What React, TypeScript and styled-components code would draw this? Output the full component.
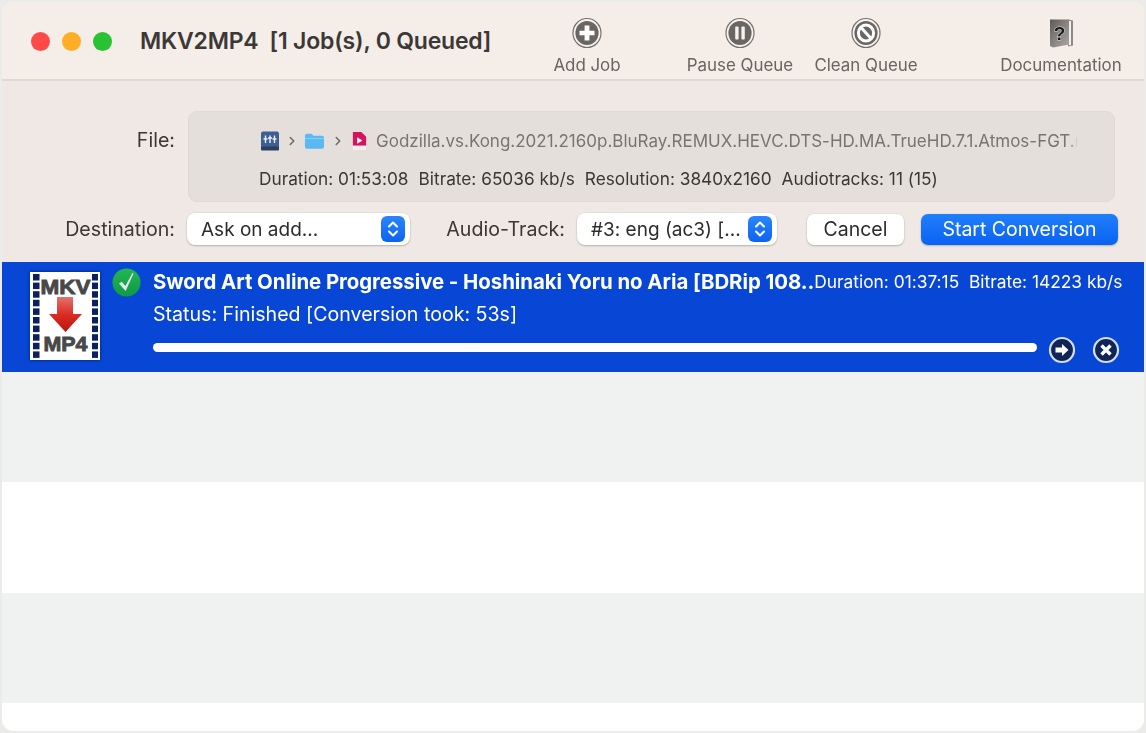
import React, { FC } from 'react'
import styled, { createGlobalStyle } from 'styled-components'
import { ChevronRight } from 'lucide-react'

const Global = createGlobalStyle`
  html, body, #root {
    margin: 0;
    height: 100%;
  }
  body {
    background: #ebebea;
    font-family: Inter, "Liberation Sans", sans-serif;
    font-feature-settings: "calt" 0;
    -webkit-font-smoothing: antialiased;
  }
  * {
    box-sizing: border-box;
  }
`

const Window = styled.div`
  width: 1142px;
  height: 729px;
  margin: 2px 0 0 2px;
  border-radius: 12px;
  overflow: hidden;
  background: #ffffff;
  display: flex;
  flex-direction: column;
  filter: blur(0.35px);
`

const TitleBar = styled.header`
  height: 79px;
  flex: none;
  background: #f5ede8;
  border-bottom: 2px solid #dfd8d4;
  display: flex;
  align-items: flex-start;
`

const Lights = styled.div`
  display: flex;
  gap: 12px;
  padding: 30px 0 0 29px;
  width: 138px;
  flex: none;
`

const Light = styled.span<{ $color: string }>`
  width: 19px;
  height: 19px;
  border-radius: 50%;
  background: ${p => p.$color};
`

const Title = styled.h1`
  margin: 0;
  width: 397px;
  flex: none;
  padding-top: 26px;
  font-size: 23px;
  line-height: 26px;
  font-weight: 600;
  color: #3b3836;
  white-space: pre;
  letter-spacing: -0.2px;
`

const ToolItem = styled.div<{ $width: number; $gap: number }>`
  width: ${p => p.$width}px;
  margin-left: ${p => p.$gap}px;
  flex: none;
  display: flex;
  flex-direction: column;
  align-items: center;
  padding-top: 15px;
`

const ToolLabel = styled.span`
  margin-top: 6px;
  font-size: 16.9px;
  line-height: 20px;
  color: #6a6461;
  white-space: nowrap;
`

const Content = styled.main`
  height: 181px;
  flex: none;
  background: #efe8e5;
  padding-top: 30px;
  display: flex;
  flex-direction: column;
`

const FileRow = styled.section`
  display: flex;
  align-items: flex-start;
`

const FormLabel = styled.label<{ $width?: number }>`
  width: ${p => p.$width ?? 173}px;
  flex: none;
  text-align: right;
  font-size: 19.6px;
  line-height: 22px;
  color: #3a3735;
  white-space: nowrap;
`

const FileLabel = styled(FormLabel)`
  padding-top: 18px;
`

const FileBox = styled.div`
  width: 927px;
  height: 91px;
  margin-left: 13px;
  background: #e5dfdc;
  border: 1px solid #e0d9d6;
  border-radius: 9px;
  padding: 18px 36px 0 71px;
`

const PathRow = styled.div`
  display: flex;
  align-items: center;
  height: 22px;
  overflow: hidden;
`

const Chevron = styled.span<{ $width: number }>`
  width: ${p => p.$width}px;
  flex: none;
  display: flex;
  justify-content: center;
  color: #6e6966;
`

const PathIcon = styled.svg`
  flex: none;
`

const FileName = styled.span`
  margin-left: 8px;
  font-size: 17px;
  line-height: 22px;
  color: #797471;
  white-space: nowrap;
  overflow: hidden;
  flex: 1;
  min-width: 0;
  mask-image: linear-gradient(to left, transparent 0, #000 10px);
`

const InfoRow = styled.div`
  display: flex;
  gap: 10px;
  margin: 17px 0 0 -1px;
  font-size: 17.25px;
  line-height: 20px;
  color: #3a3735;
  white-space: pre;
`

const ControlRow = styled.section`
  display: flex;
  align-items: center;
  margin-top: 11px;
  height: 32px;
`

const Select = styled.div<{ $width: number; $left: number }>`
  width: ${p => p.$width}px;
  height: 32px;
  margin-left: ${p => p.$left}px;
  flex: none;
  background: #ffffff;
  border-radius: 8px;
  box-shadow: 0 1px 2px rgba(0, 0, 0, 0.22), 0 0 0 0.5px rgba(0, 0, 0, 0.05);
  display: flex;
  align-items: center;
  justify-content: space-between;
  padding: 0 5px 0 14px;
  font-size: 19px;
  color: #2e2c2b;
  white-space: nowrap;
`

const Stepper = styled.span`
  width: 24px;
  height: 26px;
  border-radius: 6px;
  background: linear-gradient(#2a86fb, #0c63f3);
  display: flex;
  align-items: center;
  justify-content: center;
`

const Button = styled.button<{ $primary?: boolean; $width: number; $left: number }>`
  width: ${p => p.$width}px;
  height: 31px;
  margin-left: ${p => p.$left}px;
  flex: none;
  border: 0;
  padding: 0;
  border-radius: 7px;
  font-family: inherit;
  font-feature-settings: inherit;
  font-size: 19.5px;
  color: ${p => (p.$primary ? '#ffffff' : '#2e2c2b')};
  background: ${p => (p.$primary ? 'linear-gradient(#1f7ffb, #0b62f2)' : '#ffffff')};
  box-shadow: 0 1px 2px rgba(0, 0, 0, 0.22), 0 0 0 0.5px rgba(0, 0, 0, 0.05);
`

const Table = styled.section`
  flex: 1;
  display: flex;
  flex-direction: column;
`

const JobRow = styled.article`
  height: 110px;
  flex: none;
  background: #0847d5;
  color: #ffffff;
  display: flex;
  padding: 10px 22px 0 28px;
`

const Thumb = styled.div`
  width: 70px;
  height: 88px;
  flex: none;
  box-shadow: 0 0 3px rgba(0, 0, 0, 0.6);
`

const StatusIcon = styled.div`
  width: 29px;
  height: 29px;
  flex: none;
  margin: -4px 0 0 12px;
`

const JobBody = styled.div`
  flex: 1;
  min-width: 0;
  margin-left: 12px;
  display: flex;
  flex-direction: column;
`

const JobTop = styled.div`
  display: flex;
  justify-content: space-between;
  align-items: center;
  height: 22px;
  margin-top: -1px;
`

const JobName = styled.strong`
  font-size: 20.4px;
  line-height: 22px;
  font-weight: 700;
  white-space: nowrap;
  letter-spacing: -0.05px;
  flex: none;
`

const JobMeta = styled.span`
  font-size: 17.35px;
  line-height: 22px;
  white-space: pre;
  flex: none;
`

const JobStatus = styled.div`
  margin-top: 10px;
  font-size: 19.6px;
  line-height: 22px;
`

const ProgressRow = styled.div`
  display: flex;
  align-items: center;
  margin-top: 11px;
  height: 28px;
`

const Progress = styled.div`
  width: 884px;
  height: 9px;
  flex: none;
  margin-bottom: 5px;
  border-radius: 5px;
  background: #ffffff;
`

const RoundButton = styled.span<{ $left: number }>`
  width: 28px;
  height: 28px;
  margin-left: ${p => p.$left}px;
  flex: none;
  display: block;
`

const EmptyRow = styled.div<{ $odd?: boolean }>`
  height: 110.34px;
  flex: none;
  background: ${p => (p.$odd ? '#f0f2f1' : '#ffffff')};
`

const ToolCircle: FC<{ children: React.ReactNode }> = ({ children }) => (
  <svg width="30" height="32" viewBox="0 0 30 32">
    <ellipse cx="15" cy="16" rx="14" ry="14.5" fill="#f7f3f0" stroke="#77716e" strokeWidth="1.2" />
    <ellipse cx="15" cy="16" rx="11.6" ry="12" fill="#6a6663" />
    {children}
  </svg>
)

const RoundIcon: FC<{ children: React.ReactNode }> = ({ children }) => (
  <svg width="28" height="28" viewBox="0 0 28 28">
    <circle cx="14" cy="14" r="12" fill="#0f2558" stroke="#d5deef" strokeWidth="2.2" />
    {children}
  </svg>
)

const StepperArrows: FC = () => (
  <svg width="14" height="20" viewBox="0 0 14 20" fill="none" stroke="#ffffff" strokeWidth="2" strokeLinecap="round" strokeLinejoin="round">
    <path d="M3 7.500L7 3.500l4 4M3 12.500l4 4 4-4" />
  </svg>
)

const MkvIcon: FC = () => (
  <svg width="70" height="88" viewBox="0 0 70 88">
    <defs>
      <linearGradient id="arrow" x1="0" y1="0" x2="0" y2="1">
        <stop offset="0" stopColor="#e0736c" />
        <stop offset="0.5" stopColor="#dc2c24" />
        <stop offset="1" stopColor="#b9140f" />
      </linearGradient>
    </defs>
    <rect width="70" height="88" fill="#ffffff" />
    {Array.from({ length: 10 }).map((_, i) => (
      <g key={i} fill="#0b2060">
        <rect x="3" y={2 + i * 8.6} width="6.500" height="6.500" />
        <rect x="62" y={2 + i * 8.6} width="6" height="6.500" />
      </g>
    ))}
    <text x="35.500" y="22" textAnchor="middle" fontFamily="Liberation Sans" fontWeight="700" fontSize="21" fill="#484848" stroke="#484848" strokeWidth="0.9" textLength="50" lengthAdjust="spacingAndGlyphs">MKV</text>
    <path d="M27 25h16v17h9L35.500 60 19 42h8z" fill="url(#arrow)" />
    <text x="35.500" y="79" textAnchor="middle" fontFamily="Liberation Sans" fontWeight="700" fontSize="21" fill="#484848" stroke="#484848" strokeWidth="0.9" textLength="44" lengthAdjust="spacingAndGlyphs">MP4</text>
  </svg>
)

const App: FC = () => (
  <>
    <Global />
    <Window>
      <TitleBar>
        <Lights>
          <Light $color="#fe4a47" />
          <Light $color="#fdae24" />
          <Light $color="#29c232" />
        </Lights>
        <Title>MKV2MP4  [1 Job(s), 0 Queued]</Title>
        <ToolItem $width={100} $gap={0}>
          <ToolCircle>
            <path d="M12.600 8.500h4.800v5.200h5.100v4.600h-5.100v5.200h-4.800v-5.200H7.500v-4.600h5.100z" fill="#ffffff" />
          </ToolCircle>
          <ToolLabel>Add Job</ToolLabel>
        </ToolItem>
        <ToolItem $width={120} $gap={43}>
          <ToolCircle>
            <rect x="10.200" y="9.500" width="3.400" height="13" rx="1" fill="#f5f2f0" />
            <rect x="16.400" y="9.500" width="3.400" height="13" rx="1" fill="#f5f2f0" />
          </ToolCircle>
          <ToolLabel>Pause Queue</ToolLabel>
        </ToolItem>
        <ToolItem $width={120} $gap={6}>
          <ToolCircle>
            <ellipse cx="15" cy="16" rx="7.600" ry="8" fill="none" stroke="#ffffff" strokeWidth="3" />
            <path d="M10 10.500l10 11" stroke="#ffffff" strokeWidth="3" />
          </ToolCircle>
          <ToolLabel>Clean Queue</ToolLabel>
        </ToolItem>
        <ToolItem $width={140} $gap={65}>
          <svg width="30" height="32" viewBox="0 0 30 32">
            <defs>
              <linearGradient id="doc" x1="0" y1="0" x2="1" y2="1">
                <stop offset="0" stopColor="#5c5957" />
                <stop offset="0.45" stopColor="#83807e" />
                <stop offset="1" stopColor="#aaa7a5" />
              </linearGradient>
            </defs>
            <path d="M22 2.500l5 1v25l-5 1z" fill="#8c8886" />
            <path d="M23 4h2v24l-2 .5z" fill="#f2efed" />
            <path d="M4 2.500h19v25l-16 3-3-1.500z" fill="url(#doc)" />
            <text x="13.500" y="23" textAnchor="middle" fontFamily="Liberation Sans" fontWeight="700" fontSize="19" fill="#1c1a19" stroke="#d8d5d3" strokeWidth="1" paintOrder="stroke">?</text>
          </svg>
          <ToolLabel>Documentation</ToolLabel>
        </ToolItem>
      </TitleBar>

      <Content>
        <FileRow>
          <FileLabel>File:</FileLabel>
          <FileBox>
            <PathRow>
              <PathIcon width="20" height="20" viewBox="0 0 20 20">
                <rect x="1" y="0.500" width="18" height="18" rx="2" fill="#3d5f95" />
                <rect x="1" y="15.500" width="18" height="4" rx="1" fill="#2d3f5f" />
                <path d="M5.500 4.500v7.500M10 4.500v7.500M14.500 4.500v7.500M3.500 8h4M8 7h4M12.500 8h4" stroke="#eef2f8" strokeWidth="1.400" />
              </PathIcon>
              <Chevron $width={24}><ChevronRight size={14} strokeWidth={2.6} /></Chevron>
              <PathIcon width="21" height="20" viewBox="0 0 22 20">
                <path d="M1 4.500A2 2 0 0 1 3 2.500h5l2 2h9a2 2 0 0 1 2 2V16a2 2 0 0 1-2 2H3a2 2 0 0 1-2-2z" fill="#5bb8f2" />
                <path d="M1 7h20v1H1z" fill="#8ed2f8" />
              </PathIcon>
              <Chevron $width={26}><ChevronRight size={14} strokeWidth={2.6} /></Chevron>
              <PathIcon width="17" height="20" viewBox="0 0 18 20">
                <path d="M2 0.500h9l5 5v9.500H2z" fill="#d6145e" />
                <path d="M2 15h14v4.500H2z" fill="#f4eef0" />
                <path d="M6.500 6l5.500 3.500L6.500 13z" fill="#ffffff" />
              </PathIcon>
              <FileName>Godzilla.vs.Kong.2021.2160p.BluRay.REMUX.HEVC.DTS-HD.MA.TrueHD.7.1.Atmos-FGT.mkv</FileName>
            </PathRow>
            <InfoRow>
              <span>Duration: 01:53:08</span>
              <span>Bitrate: 65036 kb/s</span>
              <span>Resolution: 3840x2160</span>
              <span>Audiotracks: 11 (15)</span>
            </InfoRow>
          </FileBox>
        </FileRow>

        <ControlRow>
          <FormLabel>Destination:</FormLabel>
          <Select $width={223} $left={12}>
            Ask on add...
            <Stepper><StepperArrows /></Stepper>
          </Select>
          <FormLabel $width={155}>Audio-Track:</FormLabel>
          <Select $width={200} $left={12}>
            #3: eng (ac3) [...
            <Stepper><StepperArrows /></Stepper>
          </Select>
          <Button $width={97} $left={30}>Cancel</Button>
          <Button $primary $width={197} $left={17}>Start Conversion</Button>
        </ControlRow>
      </Content>

      <Table>
        <JobRow>
          <Thumb><MkvIcon /></Thumb>
          <StatusIcon>
            <svg width="29" height="29" viewBox="0 0 29 29">
              <defs>
                <linearGradient id="ok" x1="0" y1="0" x2="0" y2="1">
                  <stop offset="0" stopColor="#22b652" />
                  <stop offset="1" stopColor="#0e9a45" />
                </linearGradient>
              </defs>
              <circle cx="14.500" cy="14.500" r="14" fill="url(#ok)" />
              <path d="M7 15.500l2.800-1.800 3.600 4.300L20.400 5l1.200.6L13.600 23z" fill="#e2ecf0" />
            </svg>
          </StatusIcon>
          <JobBody>
            <JobTop>
              <JobName>Sword Art Online Progressive - Hoshinaki Yoru no Aria [BDRip 108..</JobName>
              <JobMeta>Duration: 01:37:15  Bitrate: 14223 kb/s</JobMeta>
            </JobTop>
            <JobStatus>Status: Finished [Conversion took: 53s]</JobStatus>
            <ProgressRow>
              <Progress />
              <RoundButton $left={11}>
                <RoundIcon>
                  <path d="M7.500 11.500h6.500V8l6.500 6-6.500 6v-3.500H7.500z" fill="#ffffff" />
                </RoundIcon>
              </RoundButton>
              <RoundButton $left={16}>
                <RoundIcon>
                  <path d="M9.500 9.500l9 9M18.500 9.500l-9 9" stroke="#ffffff" strokeWidth="3.400" />
                </RoundIcon>
              </RoundButton>
            </ProgressRow>
          </JobBody>
        </JobRow>
        <EmptyRow $odd />
        <EmptyRow />
        <EmptyRow $odd />
        <EmptyRow />
      </Table>
    </Window>
  </>
)

export default App
